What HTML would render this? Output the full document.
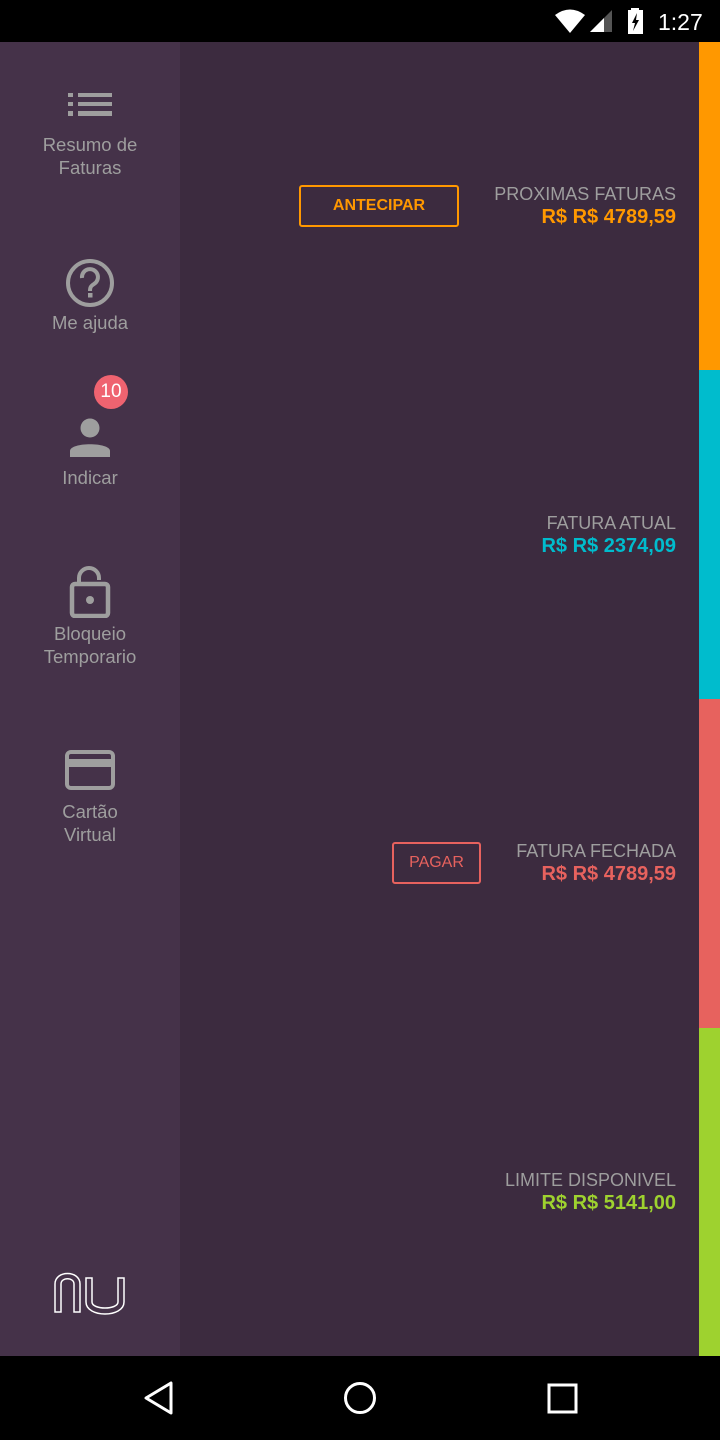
<!DOCTYPE html>
<html><head><meta charset="utf-8"><style>
*{margin:0;padding:0;box-sizing:border-box}
body{width:720px;height:1440px;background:#000;position:relative;overflow:hidden;font-family:"Liberation Sans",sans-serif}
.status{position:absolute;top:0;left:0;width:720px;height:42px;background:#000}
.side{position:absolute;top:42px;left:0;width:180px;height:1314px;background:#453249}
.main{position:absolute;top:42px;left:180px;width:519px;height:1314px;background:#3c2b3f}
.bar{position:absolute;left:699px;width:21px}
.nav{position:absolute;top:1356px;left:0;width:720px;height:84px;background:#000}
.lbl{position:absolute;left:0;width:180px;text-align:center;color:#9e9e9e;font-size:18.5px;line-height:23px}
.ic{position:absolute}
.r{position:absolute;right:44px;text-align:right}
.r .t{color:#9e9e9e;font-size:18px;line-height:22px}
.r .v{font-size:20px;font-weight:bold;line-height:24px}
.btn{position:absolute;border:2px solid;border-radius:3px;font-size:16px;font-weight:bold;text-align:center}
</style></head><body>
<div class="status">
<svg style="position:absolute;left:554px;top:8px" width="32" height="26" viewBox="0 0 32 26"><path d="M1 7 Q16 -4 31 7 L16 25Z" fill="#fff"/></svg>
<svg style="position:absolute;left:590px;top:10px" width="24" height="24"><path d="M0 22 L22 0 V22Z" fill="#555"/><path d="M0 22 L14 8 V22Z" fill="#fff"/></svg>
<svg style="position:absolute;left:627px;top:8px" width="18" height="27"><rect x="4" y="0" width="8" height="3" fill="#fff"/><rect x="1" y="2" width="15" height="24" fill="#fff"/><path d="M10 5 L5 15 H8 L6 23 L12 12 H9 Z" fill="#000"/></svg>
<div style="position:absolute;left:658px;top:8px;color:#fff;font-size:23px;line-height:28px">1:27</div>
</div>
<div class="side"></div>
<div class="main"></div>
<div class="bar" style="top:42px;height:328px;background:#ff9800"></div>
<div class="bar" style="top:370px;height:329px;background:#00bccd"></div>
<div class="bar" style="top:699px;height:329px;background:#e7625e"></div>
<div class="bar" style="top:1028px;height:328px;background:#9ed22f"></div>

<svg class="ic" style="left:68px;top:93px" width="44" height="24"><g fill="#9e9e9e"><rect x="0" y="0" width="5" height="4"/><rect x="0" y="9" width="5" height="4"/><rect x="0" y="18" width="5" height="5"/><rect x="10" y="0" width="34" height="4"/><rect x="10" y="9" width="34" height="4"/><rect x="10" y="18" width="34" height="5"/></g></svg>
<div class="lbl" style="top:133px">Resumo de<br>Faturas</div>

<svg class="ic" style="left:65px;top:258px" width="50" height="50" viewBox="0 0 50 50"><circle cx="25" cy="25" r="22" fill="none" stroke="#9e9e9e" stroke-width="4"/><path d="M17 20 a8 8 0 1 1 12 6 c-3 2 -4 3 -4 7" fill="none" stroke="#9e9e9e" stroke-width="4"/><rect x="23" y="35" width="4.5" height="4.5" fill="#9e9e9e"/></svg>
<div class="lbl" style="top:311px">Me ajuda</div>

<div style="position:absolute;left:94px;top:375px;width:34px;height:34px;border-radius:50%;background:#ef6370;color:#fff;font-size:19px;line-height:34px;text-align:center">10</div>
<svg class="ic" style="left:70px;top:418px" width="40" height="40"><circle cx="20" cy="10" r="9.5" fill="#9e9e9e"/><path d="M0 39 V33 C0 24 40 24 40 33 V39Z" fill="#9e9e9e"/></svg>
<div class="lbl" style="top:466px">Indicar</div>

<svg class="ic" style="left:68px;top:566px" width="44" height="52"><path d="M11 18 V12 a10 10 0 0 1 20 0 V14" fill="none" stroke="#9e9e9e" stroke-width="4"/><rect x="4" y="18" width="36" height="32" rx="3" fill="none" stroke="#9e9e9e" stroke-width="4.5"/><circle cx="22" cy="34" r="4" fill="#9e9e9e"/></svg>
<div class="lbl" style="top:622px">Bloqueio<br>Temporario</div>

<svg class="ic" style="left:65px;top:750px" width="50" height="40"><rect x="2" y="2" width="46" height="36" rx="4" fill="none" stroke="#9e9e9e" stroke-width="4"/><rect x="2" y="9" width="46" height="8" fill="#9e9e9e"/></svg>
<div class="lbl" style="top:800px">Cartão<br>Virtual</div>

<svg class="ic" style="left:52px;top:1268px" width="76" height="52"><g fill="none" stroke="#fff" stroke-width="1.5"><path d="M3 44 V16 C3 2 28 2 28 16 V44 H22 V16 C22 9 9 9 9 16 V44Z"/><path d="M34 10 V34 C34 50 72 50 72 34 V10 H66 V34 C66 42 40 42 40 34 V10Z"/></g></svg>

<div class="btn" style="left:299px;top:185px;width:160px;height:42px;border-color:#ff9800;color:#ff9800;line-height:38px">ANTECIPAR</div>
<div class="r" style="top:183px"><div class="t">PROXIMAS FATURAS</div><div class="v" style="color:#ff9800">R$ R$ 4789,59</div></div>

<div class="r" style="top:512px"><div class="t">FATURA ATUAL</div><div class="v" style="color:#00bccd">R$ R$ 2374,09</div></div>

<div class="btn" style="left:392px;top:842px;width:89px;height:42px;border-color:#e7625e;color:#e7625e;line-height:38px;font-weight:normal">PAGAR</div>
<div class="r" style="top:840px"><div class="t">FATURA FECHADA</div><div class="v" style="color:#e7625e">R$ R$ 4789,59</div></div>

<div class="r" style="top:1169px"><div class="t">LIMITE DISPONIVEL</div><div class="v" style="color:#9ed22f">R$ R$ 5141,00</div></div>

<div class="nav">
<svg style="position:absolute;left:143px;top:25px" width="32" height="34"><path d="M28 2 V32 L3 17Z" fill="none" stroke="#fff" stroke-width="3" stroke-linejoin="round"/></svg>
<svg style="position:absolute;left:343px;top:25px" width="34" height="34"><circle cx="17" cy="17" r="14.5" fill="none" stroke="#fff" stroke-width="3"/></svg>
<svg style="position:absolute;left:547px;top:27px" width="32" height="32"><rect x="2" y="2" width="27" height="27" fill="none" stroke="#fff" stroke-width="3"/></svg>
</div>
</body></html>
